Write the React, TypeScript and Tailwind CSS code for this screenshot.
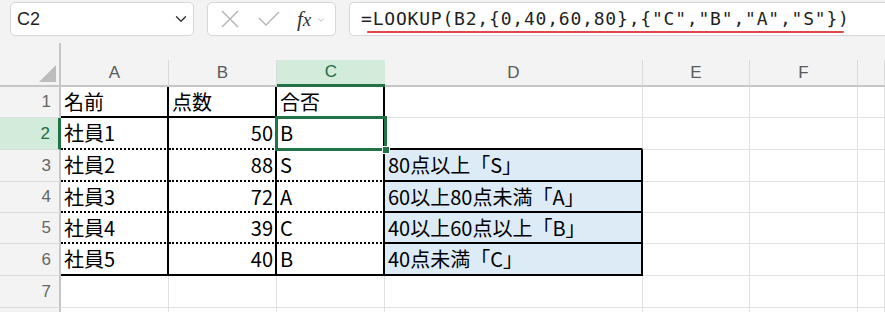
import { ChevronDown } from 'lucide-react';

const COLS = ['A', 'B', 'C', 'D', 'E', 'F', ''];
const ROW_H = [31, 32, 32, 31, 31, 32, 32, 20];

const rows: string[][] = [
  ['名前', '点数', '合否', ''],
  ['社員1', '50', 'B', ''],
  ['社員2', '88', 'S', '80点以上「S」'],
  ['社員3', '72', 'A', '60以上80点未満「A」'],
  ['社員4', '39', 'C', '40以上60点以上「B」'],
  ['社員5', '40', 'B', '40点未満「C」'],
  ['', '', '', ''],
  ['', '', '', ''],
];

const cellFont = { fontFamily: '"Noto Sans CJK JP", "Noto Sans", sans-serif' };
const uiFont = { fontFamily: '"Liberation Sans", Arial, sans-serif' };

// border classes per cell (row r is 1-based, c is 0..6 for A..G)
function cellClass(r: number, c: number) {
  const inTable = r >= 1 && r <= 6 && c <= 2;
  const inD = c === 3 && r >= 3 && r <= 6;
  let cls = 'relative flex items-center whitespace-nowrap ';
  if (!(r === 2 && c === 2)) cls += 'overflow-hidden ';
  if (inTable) {
    cls += 'border-r-2 border-r-black ';
    if (r === 1 || r === 6) cls += 'border-b-2 border-b-black ';
    else cls += 'border-b-2 border-b-black [border-bottom-style:dotted] ';
  } else if (inD) {
    cls += 'bg-[#ddebf7] border-r-2 border-r-black border-b-2 border-b-black ';
  } else if (c === 3 && r === 2) {
    cls += 'border-r border-r-[#e1e1e1] border-b-2 border-b-black ';
  } else {
    cls += 'border-r border-r-[#e1e1e1] border-b border-b-[#e1e1e1] ';
  }
  if (c === 1 && r > 1) cls += 'justify-end pr-[2px] ';
  else cls += 'pl-[3px] ';
  return cls;
}

function FunctionBox() {
  return (
    <div className="flex h-[34px] w-[129px] items-center rounded-[5px] border border-[#d6d6d6] bg-white">
      <svg width="20" height="20" viewBox="0 0 20 20" className="ml-[12px]">
        <path d="M2 2 L18 18 M18 2 L2 18" stroke="#b3b3b3" strokeWidth="1.4" fill="none" />
      </svg>
      <svg width="22" height="16" viewBox="0 0 22 16" className="ml-[18px]">
        <path d="M1 7 L8 14 L21 1" stroke="#b3b3b3" strokeWidth="1.4" fill="none" />
      </svg>
      <span className="ml-[17px] text-[21px] italic leading-none text-[#333]" style={{ fontFamily: '"Liberation Serif", serif' }}>
        f<span className="text-[19px]">x</span>
      </span>
      <ChevronDown size={10} strokeWidth={1.5} className="ml-[5px] mt-[2px] text-[#999]" />
    </div>
  );
}

export default function App() {
  return (
    <div className="h-[312px] w-[885px] overflow-hidden bg-white" style={uiFont}>
      {/* formula bar */}
      <div className="h-[60px] bg-[#f3f3f3] pt-[2px]">
        <div className="flex h-[34px] items-center">
          <div className="ml-[10px] flex h-[34px] w-[184px] items-center justify-between rounded-[5px] border border-[#d6d6d6] bg-white pl-[6px] pr-[3px]">
            <span className="text-[18px] text-[#1f1f1f]">C2</span>
            <ChevronDown size={18} strokeWidth={1.8} className="text-[#333]" />
          </div>
          <div className="ml-[13px]">
            <FunctionBox />
          </div>
          <div className="ml-[13px] flex h-[34px] flex-1 items-center rounded-l-[5px] border border-r-0 border-[#d6d6d6] bg-white pl-[11px]">
            <span
              className="relative text-[18px] leading-none tracking-[0.8px] text-[#1f1f1f]"
              style={{ fontFamily: '"DejaVu Sans Mono", "Liberation Mono", monospace' }}
            >
              {'=LOOKUP(B2,{0,40,60,80},{"C","B","A","S"})'}
              <span className="absolute left-[6px] right-[6px] top-[21px] h-[2px] rounded-full bg-[#e0464a]" />
            </span>
          </div>
        </div>
        <div className="ml-[59px] mt-[7px] h-[17px] w-[2px] bg-[#c6c6c6]" />
      </div>

      {/* sheet */}
      <div className="grid grid-cols-[61px_108px_108px_108px_258px_107px_108px_1fr]">
        {/* header row */}
        <div className="relative h-[27px] border-r-2 border-b-2 border-[#c6c6c6] bg-[#f3f3f3]">
          <svg width="17" height="17" viewBox="0 0 17 17" className="absolute bottom-[3px] right-[3px]">
            <path d="M17 0 L17 17 L0 17 Z" fill="#bdbdbd" />
          </svg>
        </div>
        {COLS.map((c) =>
          c === 'C' ? (
            <div key={c} className="flex h-[27px] items-center justify-center border-b-[3px] border-b-[#217346] bg-[#d2ebdb] text-[17px] text-[#1d6b3f]">
              {c}
            </div>
          ) : (
            <div key={c || 'G'} className="flex h-[27px] items-center justify-center border-r border-r-[#dadada] border-b-2 border-b-[#c6c6c6] bg-[#f3f3f3] text-[17px] text-[#5a5a5a]">
              {c}
            </div>
          ),
        )}

        {rows.map((row, ri) => {
          const r = ri + 1;
          const h = ROW_H[ri];
          return [
            <div
              key={`h${r}`}
              style={{ height: h }}
              className={
                r === 2
                  ? 'flex items-center justify-end border-r-[3px] border-r-[#217346] border-b border-b-[#dcdcdc] bg-[#d2ebdb] pr-[8px] text-[17px] text-[#1d6b3f]'
                  : 'flex items-center justify-end border-r-2 border-r-[#c6c6c6] border-b border-b-[#dcdcdc] bg-[#f3f3f3] pr-[8px] text-[17px] text-[#666]'
              }
            >
              {r <= 7 ? r : ''}
            </div>,
            ...[0, 1, 2, 3, 4, 5, 6].map((c) => (
              <div key={`${r}-${c}`} style={{ height: h, ...cellFont }} className={cellClass(r, c) + 'text-[20px] leading-none text-black'}>
                {row[c] ?? ''}
                {r === 2 && c === 2 && (
                  <div className="pointer-events-none absolute -left-[2px] -top-[2px] z-10 h-[35px] w-[112px] border-[3px] border-[#217346]">
                    <div className="absolute -bottom-[6px] -right-[6px] h-[8px] w-[8px] border border-white bg-[#217346]" />
                  </div>
                )}
              </div>
            )),
          ];
        })}
      </div>
    </div>
  );
}
